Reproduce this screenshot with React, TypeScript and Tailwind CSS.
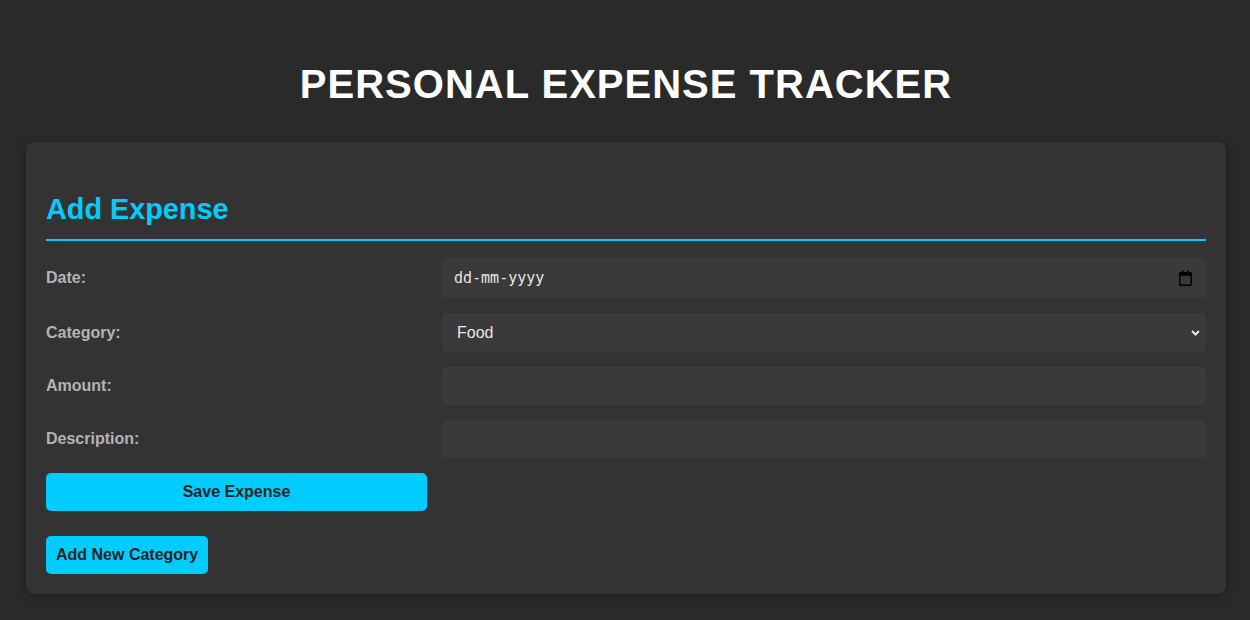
const labelCls = "text-[16px] font-bold text-[#b3b3b3] leading-[18px]";
const fieldCls = "bg-[#3a3a3a] rounded-[5px] flex items-center";

const CalendarIcon = () => (
  <svg width="13" height="16" viewBox="0 0 13 16" fill="none">
    <rect x="3" y="0.5" width="1.6" height="2.5" fill="#000" />
    <rect x="8.4" y="0.5" width="1.6" height="2.5" fill="#000" />
    <rect x="0.75" y="2.75" width="11.5" height="12.5" rx="1" stroke="#000" strokeWidth="1.5" />
    <rect x="0.75" y="2.75" width="11.5" height="3" fill="#000" />
  </svg>
);

const Chevron = () => (
  <svg width="9" height="6" viewBox="0 0 9 6" fill="none">
    <path d="M1 1L4.5 4.5L8 1" stroke="#e8e8e8" strokeWidth="2" />
  </svg>
);

const App = () => {
  return (
    <div
      className="min-h-screen bg-[#2a2a2a] pt-[61px] pb-[26px]"
      style={{ fontFamily: '"Liberation Sans", Arial, sans-serif' }}
    >
      <h1 className="text-center text-white text-[40px] font-bold tracking-[1px] leading-[46px] mb-[35px] pl-[2px]">
        PERSONAL EXPENSE TRACKER
      </h1>

      <div className="w-[1200px] ml-[26px] bg-[#333333] rounded-[8px] px-[20px] pt-[20px] pb-[20px] shadow-[0_2px_8px_rgba(0,0,0,0.3)]">
        {/* Heading */}
        <h2 className="mt-[31px] pb-[13px] border-b-2 border-[#00ccff] text-[#00ccff] text-[28.8px] font-bold leading-[33px]">
          Add Expense
        </h2>

        {/* Form */}
        <div className="mt-[17px] grid grid-cols-[381px_1fr] gap-x-[15px] gap-y-[15px] items-center">
          <label className={labelCls}>Date:</label>
          <div className={`${fieldCls} h-[40px] pl-[12px] pr-[14px] justify-between`}>
            <span
              className="text-[15px] text-[#e6e6e6]"
              style={{ fontFamily: '"DejaVu Sans Mono", monospace' }}
            >
              dd-mm-yyyy
            </span>
            <CalendarIcon />
          </div>

          <label className={labelCls}>Category:</label>
          <div className={`${fieldCls} h-[39px] pl-[15px] pr-[6px] justify-between`}>
            <span className="text-[16px] text-[#e8e8e8]">Food</span>
            <Chevron />
          </div>

          <label className={labelCls}>Amount:</label>
          <div className={`${fieldCls} h-[38px]`}></div>

          <label className={labelCls}>Description:</label>
          <div className={`${fieldCls} h-[38px]`}></div>

          <button className="h-[38px] bg-[#00ccff] rounded-[5px] text-[#222] text-[16px] font-bold">
            Save Expense
          </button>
          <div></div>
        </div>

        <button className="mt-[25px] h-[38px] px-[10px] bg-[#00ccff] rounded-[5px] text-[#222] text-[16px] font-bold">
          Add New Category
        </button>
      </div>
    </div>
  );
};

export default App;
